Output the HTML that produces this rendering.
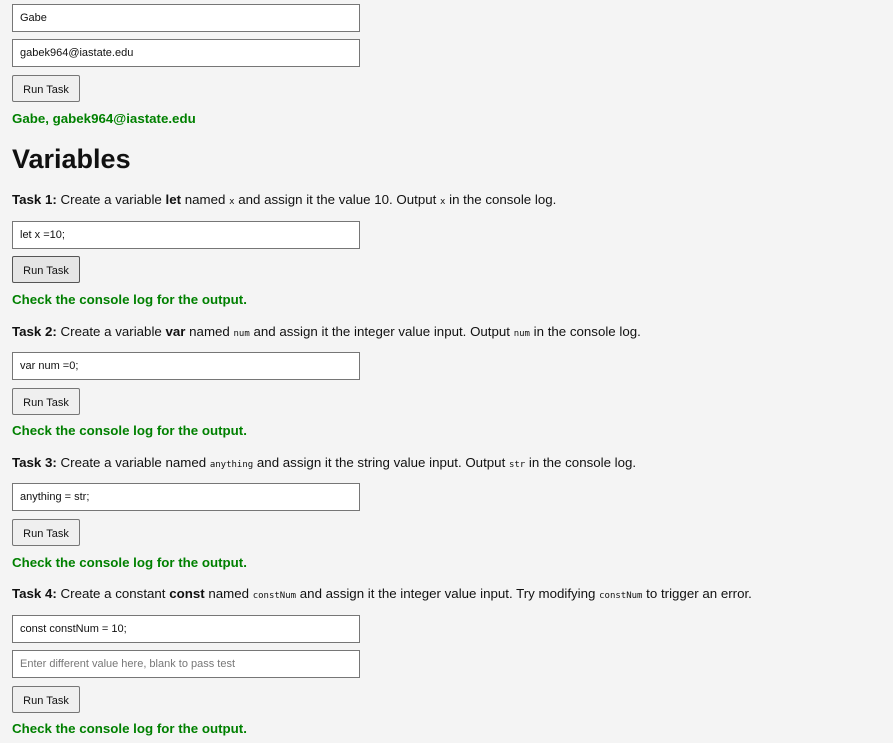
<!DOCTYPE html>
<html><head><style>
body{margin:0;background:#f4f4f4;font-family:"Liberation Sans",Arial,sans-serif;color:#111;width:893px;height:743px;overflow:hidden;position:relative}
.a{position:absolute;left:12px}
.in{height:26px;border:1px solid #767676;background:#fff;font-size:11px;line-height:27px;padding-left:7px;box-sizing:content-box;width:339px;color:#111}
.btn{width:66px;height:25px;border:1px solid #767676;background:#efefef;font-size:11px;line-height:28px;text-align:center;border-radius:2px}
.g{color:#008000;font-weight:bold;font-size:13.3px;line-height:20px;height:20px}
.t{font-size:13.3px;line-height:20px;height:20px;white-space:nowrap}
code{font-family:"DejaVu Sans Mono",monospace;font-size:9px}
h1{margin:0;font-size:27px;font-weight:bold;line-height:34px}
</style></head><body>
<div class="a in" style="top:4px">Gabe</div>
<div class="a in" style="top:39px">gabek964@iastate.edu</div>
<div class="a btn" style="top:75px">Run Task</div>
<div class="a g" style="top:109px">Gabe, gabek964@iastate.edu</div>
<h1 class="a" style="top:142px">Variables</h1>

<div class="a t" style="top:190px"><b>Task 1:</b> Create a variable <b>let</b> named <code>x</code> and assign it the value 10. Output <code>x</code> in the console log.</div>
<div class="a in" style="top:221px">let x =10;</div>
<div class="a btn" style="top:256px;background:#e5e5e5;border-color:#555">Run Task</div>
<div class="a g" style="top:290px">Check the console log for the output.</div>

<div class="a t" style="top:322px"><b>Task 2:</b> Create a variable <b>var</b> named <code>num</code> and assign it the integer value input. Output <code>num</code> in the console log.</div>
<div class="a in" style="top:352px">var num =0;</div>
<div class="a btn" style="top:388px">Run Task</div>
<div class="a g" style="top:421px">Check the console log for the output.</div>

<div class="a t" style="top:453px"><b>Task 3:</b> Create a variable named <code>anything</code> and assign it the string value input. Output <code>str</code> in the console log.</div>
<div class="a in" style="top:483px">anything = str;</div>
<div class="a btn" style="top:519px">Run Task</div>
<div class="a g" style="top:553px">Check the console log for the output.</div>

<div class="a t" style="top:584px"><b>Task 4:</b> Create a constant <b>const</b> named <code>constNum</code> and assign it the integer value input. Try modifying <code>constNum</code> to trigger an error.</div>
<div class="a in" style="top:615px">const constNum = 10;</div>
<div class="a in" style="top:650px;color:#777">Enter different value here, blank to pass test</div>
<div class="a btn" style="top:686px">Run Task</div>
<div class="a g" style="top:719px">Check the console log for the output.</div>
</body></html>
